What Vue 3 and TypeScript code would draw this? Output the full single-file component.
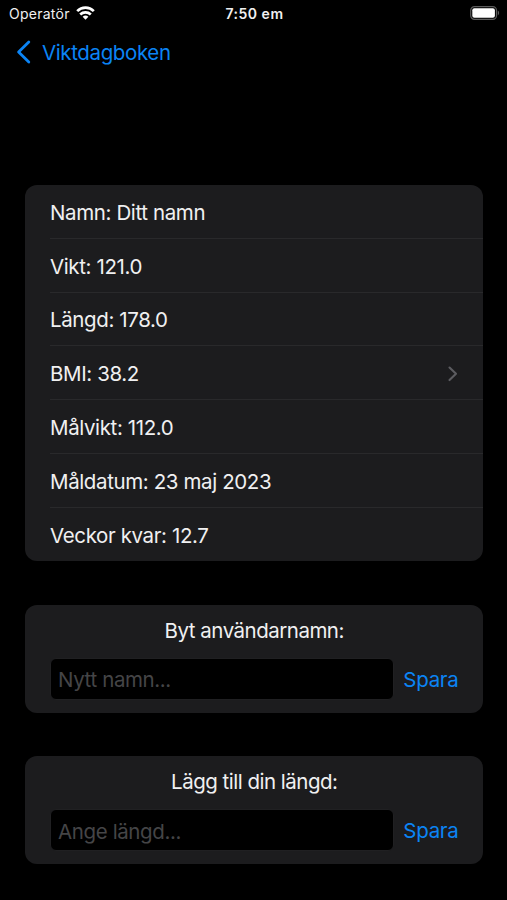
<script setup lang="ts">
interface Row {
  label: string
  link?: boolean
}
interface Form {
  title: string
  placeholder: string
}

const rows: Row[] = [
  { label: 'Namn: Ditt namn' },
  { label: 'Vikt: 121.0' },
  { label: 'Längd: 178.0' },
  { label: 'BMI: 38.2', link: true },
  { label: 'Målvikt: 112.0' },
  { label: 'Måldatum: 23 maj 2023' },
  { label: 'Veckor kvar: 12.7' },
]
const forms: Form[] = [
  { title: 'Byt användarnamn:', placeholder: 'Nytt namn...' },
  { title: 'Lägg till din längd:', placeholder: 'Ange längd...' },
]
</script>

<template>
  <main class="screen">
    <header class="status">
      <div class="carrier">
        <span>Operatör</span>
        <svg width="19" height="14" viewBox="0 0 19 14" fill="none" stroke="#fff" stroke-width="2.7">
          <path d="M1.2 5.1a11.8 11.8 0 0 1 16.6 0M4.2 8.4a7.7 7.7 0 0 1 10.6 0" />
          <path d="M9.5 13.8 6.6 10.8a4.2 4.2 0 0 1 5.8 0Z" fill="#fff" stroke="none" />
        </svg>
      </div>
      <span class="time">7:50 em</span>
      <div class="power">
        <svg width="30" height="14" viewBox="0 0 30 14">
          <rect x=".7" y=".6" width="25.8" height="12.8" rx="3.8" fill="none" stroke="#5c5c5c" stroke-width="1.2" />
          <rect x="2.3" y="2.3" width="22.6" height="9.4" rx="2" fill="#fff" />
          <path d="M27.8 4.6v4.8c1.8-.8 1.8-4 0-4.8Z" fill="#5c5c5c" />
        </svg>
      </div>
    </header>
    <nav class="nav">
      <svg width="15" height="24" viewBox="0 0 15 24" fill="none" stroke="#0b84f5" stroke-width="2.8" stroke-linecap="round" stroke-linejoin="round">
        <path d="M12.8 2 2.6 12l10.2 10" />
      </svg>
      <span>Viktdagboken</span>
    </nav>
    <section class="card list">
      <div v-for="row in rows" :key="row.label" class="row">
        <span>{{ row.label }}</span>
        <svg v-if="row.link" width="10" height="16" viewBox="0 0 10 16" fill="none" stroke="#5c5c60" stroke-width="2.1" stroke-linecap="round" stroke-linejoin="round">
          <path d="m1.5 1.5 6.5 6.3-6.5 6.3" />
        </svg>
      </div>
    </section>
    <section v-for="form in forms" :key="form.title" class="card form">
      <h2>{{ form.title }}</h2>
      <div class="entry">
        <input type="text" :placeholder="form.placeholder" />
        <button type="button">Spara</button>
      </div>
    </section>
  </main>
</template>

<style>
body {
  background: #000;
}
</style>

<style scoped>
.screen {
  box-sizing: border-box;
  width: 507px;
  height: 900px;
  overflow: hidden;
  background: #000;
  color: #f0f0f1;
  font-family: Inter, "Liberation Sans", sans-serif;
  font-size: 20.5px;
  letter-spacing: -0.38px;
}
.status {
  display: grid;
  grid-template-columns: 1fr auto 1fr;
  align-items: center;
  height: 27px;
  padding: 0 7px 0 9px;
  font-size: 14px;
  letter-spacing: 0.25px;
}
.carrier {
  display: flex;
  align-items: center;
  gap: 6px;
}
.carrier svg {
  margin-top: -1px;
}
.time {
  font-weight: 600;
  letter-spacing: 0.5px;
}
.power {
  display: flex;
  justify-content: flex-end;
  margin-top: -1px;
}
.nav {
  display: flex;
  align-items: center;
  gap: 11px;
  height: 50px;
  padding-left: 16px;
  color: #0b84f5;
}
.nav span {
  padding-top: 1px;
}
.card {
  box-sizing: border-box;
  margin: 0 24.5px 43.5px 25px;
  border-radius: 12px;
  background: #1c1c1e;
}
.list {
  margin-top: 108px;
  height: 376.3px;
}
.row {
  box-sizing: border-box;
  display: flex;
  align-items: center;
  justify-content: space-between;
  height: 53.75px;
  margin-left: 25px;
  padding: 2px 25px 0 0;
  border-bottom: 1px solid #29292b;
}
.row:last-child {
  border-bottom: 0;
}
.form {
  height: 108px;
  padding: 13px 24px 0 25px;
}
h2 {
  margin: 0;
  font-size: 20.5px;
  font-weight: 400;
  letter-spacing: -0.5px;
  line-height: 26px;
  text-align: center;
}
.entry {
  display: flex;
  align-items: center;
  justify-content: space-between;
  margin-top: 14px;
}
input {
  box-sizing: border-box;
  width: 344px;
  height: 42px;
  padding: 2px 7px 0;
  border: 1px solid #202022;
  border-radius: 6px;
  background: #000;
  color: #fff;
  font: inherit;
  letter-spacing: inherit;
}
input::placeholder {
  color: #454547;
  opacity: 1;
}
button {
  padding: 1px 0 0;
  border: 0;
  background: none;
  color: #0b84f5;
  font: inherit;
  letter-spacing: -0.3px;
}
</style>
